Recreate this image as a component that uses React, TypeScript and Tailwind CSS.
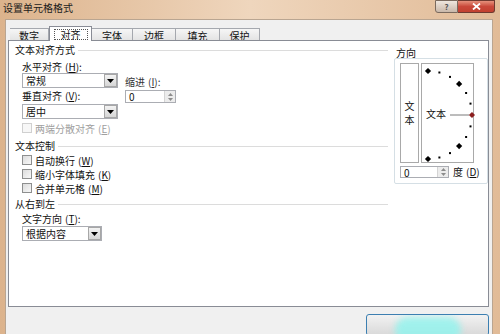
import React from "react";

const font = "font-['Noto_Sans_CJK_SC','Noto_Sans',sans-serif]";

function Key({ k }: { k: string }) {
  return (
    <span className="ml-[3px]">
      (<span className="underline">{k}</span>)
    </span>
  );
}

function Arrow() {
  return (
    <svg width="7" height="4" viewBox="0 0 7 4">
      <path d="M0 0 H7 L3.5 4 Z" fill="#000" />
    </svg>
  );
}

function Combo({ value, w }: { value: string; w: string }) {
  return (
    <div className={`flex h-[15px] ${w} border border-[#abadb3] bg-white`}>
      <span className="flex-1 pl-[3px] leading-[13px]">{value}</span>
      <div className="flex w-[13px] items-center justify-center border border-[#a7a7a7] bg-gradient-to-b from-[#f3f3f3] to-[#d6d6d6]">
        <Arrow />
      </div>
    </div>
  );
}

function Spinner({ w, h }: { w: string; h: string }) {
  return (
    <div className={`flex ${w} ${h} border border-[#abadb3] bg-white`}>
      <span className="flex-1 pl-[3px] leading-[11px]">0</span>
      <div className="flex w-[11px] flex-col items-center justify-center gap-[2px] border-l border-[#d4d4d4] bg-[#ececec]">
        <svg width="5" height="3" viewBox="0 0 5 3">
          <path d="M0 3 H5 L2.5 0 Z" fill="#8c8c8c" />
        </svg>
        <svg width="5" height="3" viewBox="0 0 5 3">
          <path d="M0 0 H5 L2.5 3 Z" fill="#8c8c8c" />
        </svg>
      </div>
    </div>
  );
}

function Check({ label, k, disabled }: { label: string; k: string; disabled?: boolean }) {
  return (
    <div className={`flex h-[14px] items-center pl-[7px] ${disabled ? "text-[#a0a0a0]" : ""}`}>
      <span
        className={`mr-[3px] h-[10px] w-[10px] border ${
          disabled
            ? "border-[#d0d0d0] bg-[#f7f7f7]"
            : "border-[#8e8f8f] bg-gradient-to-br from-[#dcdcdc] to-[#f8f8f8]"
        }`}
      />
      <span>
        {label}
        <Key k={k} />
      </span>
    </div>
  );
}

function Header({ text }: { text: string }) {
  return (
    <div className="flex h-[12px] items-center">
      <span className="leading-[12px]">{text}</span>
      <span className="ml-[3px] h-px flex-1 bg-[#dcdcdc]" />
    </div>
  );
}

const tabs = [
  { t: "数字", w: "w-[39px]" },
  { t: "对齐", w: "w-[43px]" },
  { t: "字体", w: "w-[41px]" },
  { t: "边框", w: "w-[43px]" },
  { t: "填充", w: "w-[44px]" },
  { t: "保护", w: "w-[40px]" },
];

const arcPts = [90, 75, 60, 45, 30, 15, 0, -15, -30, -45, -60, -75, -90].map((a) => {
  const r = (a * Math.PI) / 180;
  return { a, x: 5 + 44 * Math.cos(r), y: 50 - 44 * Math.sin(r) };
});

function Dial() {
  return (
    <div className="relative flex h-[100px] w-[53px] items-center border border-[#a9a9a9] bg-white pl-[4px]">
      <svg className="absolute left-0 top-0" width="53" height="100" viewBox="-1 -1 53 100">
        <line x1="27" y1="50" x2="46" y2="50" stroke="#7a7a7a" strokeWidth="1" />
        {arcPts.map((p) =>
          p.a % 45 === 0 ? (
            <rect
              key={p.a}
              x={p.x - 2.2}
              y={p.y - 2.2}
              width="4.4"
              height="4.4"
              transform={`rotate(45 ${p.x} ${p.y})`}
              fill={p.a === 0 ? "#8b1e1e" : "#000"}
            />
          ) : (
            <rect key={p.a} x={p.x - 1} y={p.y - 1} width="2" height="2" fill="#000" />
          )
        )}
      </svg>
      <span className="relative mt-[1px] leading-[12px]">文本</span>
    </div>
  );
}

export default function App() {
  return (
    <div
      className={`flex h-[334px] w-[500px] flex-col overflow-hidden bg-gradient-to-r from-[#dcb38c] via-[#efd6bd] to-[#e1bb97] text-[10px] text-[#111] ${font}`}
    >
      {/* title bar */}
      <div className="flex h-[19px] shrink-0 items-start justify-between">
        <span className="pl-[3px] pt-[2px] leading-[12px] text-[#1b1b1b]">设置单元格格式</span>
        <div className="mr-[5px] flex">
          <div className="flex h-[13px] w-[23px] items-center justify-center rounded-bl-[3px] border border-[#7a6a5e] bg-gradient-to-b from-[#eee6de] to-[#c9b8aa] text-[8px] font-bold leading-none text-[#555]">
            ?
          </div>
          <div className="flex h-[13px] w-[37px] items-center justify-center rounded-br-[3px] border border-l-0 border-[#6e3a30] bg-gradient-to-b from-[#e5907c] via-[#c9483a] to-[#c2402f]">
            <svg width="9" height="7" viewBox="0 0 9 7">
              <path d="M1 0.5 L8 6.5 M8 0.5 L1 6.5" stroke="#fff" strokeWidth="1.8" />
            </svg>
          </div>
        </div>
      </div>

      {/* client */}
      <div className="ml-[5px] mr-[7px] flex flex-1 flex-col border border-b-0 border-[#b9a591] bg-[#f0f0f0] pt-[6px]">
        <div className="flex h-[15px] pl-[4px]">
          {tabs.map((tab) =>
            tab.t === "对齐" ? (
              <div
                key={tab.t}
                className={`relative z-10 flex ${tab.w} items-center justify-center border border-b-0 border-[#898c95] bg-white`}
              >
                <span className="border border-dotted border-[#555] px-[6px] leading-[9px]">{tab.t}</span>
              </div>
            ) : (
              <div
                key={tab.t}
                className={`mt-[2px] flex ${tab.w} items-center justify-center border border-b-0 border-l-0 border-[#a5a8ae] bg-gradient-to-b from-[#f6f6f6] to-[#e2e2e2] leading-[11px]`}
              >
                {tab.t}
              </div>
            )
          )}
        </div>

        {/* tab panel */}
        <div className="-mt-px ml-[2px] mr-[3px] flex h-[267px] border border-[#898c95] bg-white">
          <div className="flex w-[379px] flex-col pl-[6px] pt-[3px]">
            <Header text="文本对齐方式" />
            <div className="mt-[5px] flex h-[12px] items-center pl-[7px] leading-[12px]">
              水平对齐
              <Key k="H" />:
            </div>
            <div className="flex pl-[7px]">
              <div className="flex flex-col">
                <Combo value="常规" w="w-[96px]" />
                <div className="flex h-[16px] items-center leading-[12px]">
                  垂直对齐
                  <Key k="V" />:
                </div>
                <Combo value="居中" w="w-[96px]" />
              </div>
              <div className="ml-[7px] flex flex-col pt-[3px]">
                <span className="h-[14px] leading-[12px] text-[#333]">
                  缩进
                  <Key k="I" />:
                </span>
                <Spinner w="w-[51px]" h="h-[13px]" />
              </div>
            </div>
            <div className="mt-[2px]">
              <Check label="两端分散对齐" k="E" disabled />
            </div>
            <div className="mt-[5px]">
              <Header text="文本控制" />
            </div>
            <div className="mt-[1px]">
              <Check label="自动换行" k="W" />
              <Check label="缩小字体填充" k="K" />
              <Check label="合并单元格" k="M" />
            </div>
            <div className="mt-[3px]">
              <Header text="从右到左" />
            </div>
            <div className="mt-[3px] flex h-[12px] items-center pl-[7px] leading-[12px]">
              文字方向
              <Key k="T" />:
            </div>
            <div className="mt-[1px] pl-[7px]">
              <Combo value="根据内容" w="w-[80px]" />
            </div>
          </div>

          <div className="ml-[6px] flex w-[94px] flex-col pt-[6px]">
            <span className="h-[11px] pl-[2px] leading-[11px]">方向</span>
            <div className="flex h-[126px] flex-col rounded-[2px] border border-[#d5dfe5] pl-[5px] pt-[4px]">
              <div className="flex gap-[2px]">
                <div className="flex h-[100px] w-[19px] flex-col items-center justify-center border border-[#a9a9a9] leading-[14px]">
                  <span>文</span>
                  <span>本</span>
                </div>
                <Dial />
              </div>
              <div className="mt-[3px] flex items-center">
                <Spinner w="w-[49px]" h="h-[12px]" />
                <span className="ml-[4px] leading-[12px]">
                  度<Key k="D" />
                </span>
              </div>
            </div>
          </div>
        </div>

        {/* footer */}
        <div className="flex flex-1 justify-end pr-[3px] pt-[7px]">
          <div className="relative h-[22px] w-[123px] overflow-hidden rounded-[3px] border border-[#3c7fb1] bg-gradient-to-b from-[#f2f2f2] to-[#d9d9d9]">
            <div className="absolute left-[28px] top-[2px] h-[26px] w-[66px] rounded-full bg-[#8ff4ee] opacity-80 blur-[3px]" />
          </div>
        </div>
      </div>
    </div>
  );
}
